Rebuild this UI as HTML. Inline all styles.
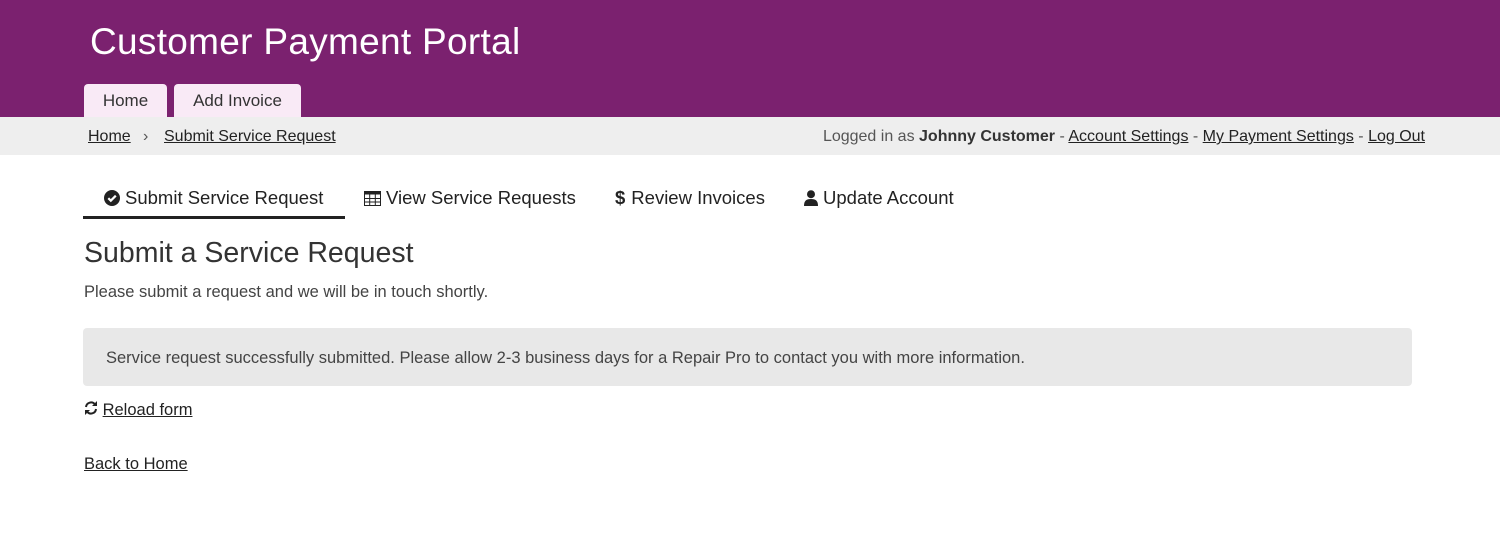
<!DOCTYPE html>
<html><head><style>
*{margin:0;padding:0;box-sizing:border-box}
body{width:1500px;height:556px;background:#fff;font-family:"Liberation Sans",sans-serif;color:#333;position:relative;overflow:hidden}
.hdr{position:absolute;left:0;top:0;width:1500px;height:117px;background:#7b216f}
.title{position:absolute;left:90px;top:21px;font-size:37px;color:#fff;letter-spacing:0.3px}
.tab{position:absolute;top:84px;height:33px;background:#f9eaf6;border-radius:4px 4px 0 0;font-size:17px;color:#333;text-align:center;line-height:34px}
.bc{position:absolute;left:0;top:117px;width:1500px;height:38px;background:#eeeeee;font-size:16px;line-height:40px}
a{color:#222;text-decoration:underline}
.nav{position:absolute;top:187px;font-size:18.5px;color:#222;white-space:nowrap}
.nav svg{vertical-align:-2px;margin-right:5px}
</style></head><body>
<div class="hdr">
<div class="title">Customer Payment Portal</div>
<div class="tab" style="left:84px;width:83px">Home</div>
<div class="tab" style="left:174px;width:127px">Add Invoice</div>
</div>
<div class="bc">
<a style="position:absolute;left:88px" >Home</a>
<span style="position:absolute;left:143px;color:#555">›</span>
<a style="position:absolute;left:164px">Submit Service Request</a>
<span style="position:absolute;right:75px;color:#555">Logged in as <b style="color:#333">Johnny Customer</b> - <a>Account Settings</a> - <a>My Payment Settings</a> - <a>Log Out</a></span>
</div>
<div class="nav" style="left:104px"><svg width="16" height="16" viewBox="0 0 16 16"><circle cx="8" cy="8" r="8" fill="#222"/><path d="M4.3 8.2l2.5 2.5 5-5" stroke="#fff" stroke-width="2.2" fill="none"/></svg>Submit Service Request</div>
<div style="position:absolute;left:83px;top:216px;width:262px;height:3px;background:#222"></div>
<div class="nav" style="left:364px"><svg width="17" height="15" viewBox="0 0 17 15"><rect x="0.5" y="0.5" width="16" height="14" fill="none" stroke="#222"/><rect x="0" y="0" width="17" height="3.5" fill="#222"/><path d="M0 7.5h17M0 11h17M5.7 0v15M11.3 0v15" stroke="#222"/></svg>View Service Requests</div>
<div class="nav" style="left:615px"><b style="margin-right:6px">$</b>Review Invoices</div>
<div class="nav" style="left:804px"><svg width="14" height="16" viewBox="0 0 14 16"><circle cx="7" cy="4.2" r="4" fill="#222"/><path d="M0 16c0-5 2-7 7-7s7 2 7 7z" fill="#222"/></svg>Update Account</div>
<div style="position:absolute;left:84px;top:237px;font-size:28.5px;color:#333">Submit a Service Request</div>
<div style="position:absolute;left:84px;top:283px;font-size:16.5px;color:#444">Please submit a request and we will be in touch shortly.</div>
<div style="position:absolute;left:83px;top:328px;width:1329px;height:58px;background:#e8e8e8;border-radius:4px;font-size:16.5px;color:#444;line-height:61px;padding-left:106px;padding-left:23px">Service request successfully submitted. Please allow 2-3 business days for a Repair Pro to contact you with more information.</div>
<div style="position:absolute;left:84px;top:401px;font-size:16.5px"><svg width="14" height="14" viewBox="0 0 14 14" style="vertical-align:0"><path d="M2 6A5 5 0 0 1 11 3.5M12 8A5 5 0 0 1 3 10.5" stroke="#222" stroke-width="2" fill="none"/><path d="M13 0v5h-5zM1 14v-5h5z" fill="#222"/></svg> <a>Reload form</a></div>
<div style="position:absolute;left:84px;top:455px;font-size:16.5px"><a>Back to Home</a></div>
</body></html>
